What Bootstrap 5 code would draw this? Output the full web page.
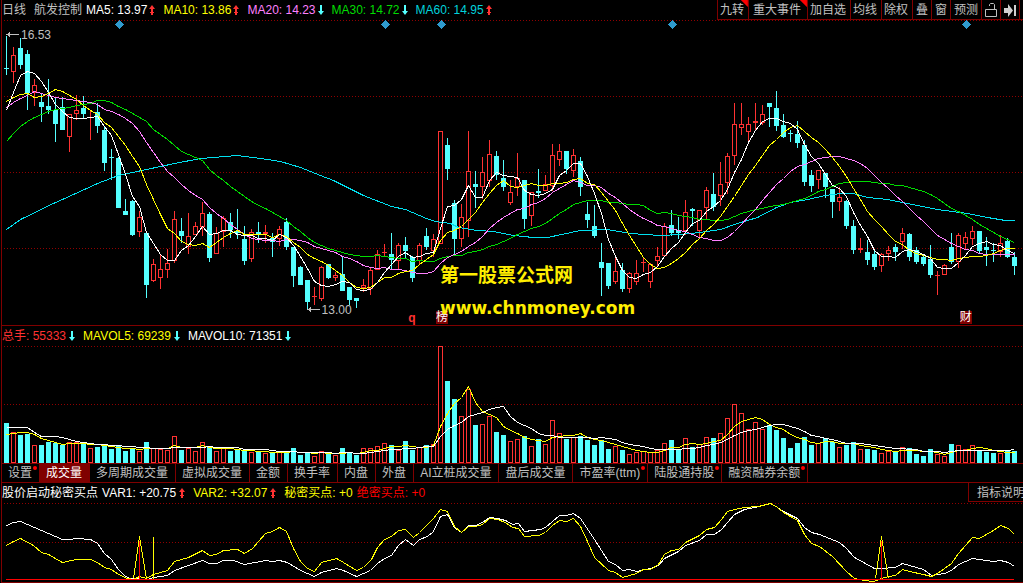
<!DOCTYPE html>
<html lang="zh-CN">
<head>
<meta charset="utf-8">
<meta name="viewport" content="width=device-width, initial-scale=1">
<title>航发控制 日线</title>
<link href="https://cdn.jsdelivr.net/npm/bootstrap@5.3.0/dist/css/bootstrap.min.css" rel="stylesheet">
<style>
:root{--frame:#800000;--up:#ff3232;--down:#54ffff;--ink:#c0c0c0}
body{background:#000;color:var(--ink);font:12px/20px "Liberation Sans","Noto Sans CJK SC",sans-serif}
button{background:none;border:0;color:inherit;font:inherit;line-height:inherit}
.frame-l{border-left:1px solid var(--frame);margin-left:1px}
.bar{height:20px;white-space:nowrap;flex:none}
.reading{margin-right:8px}
.trend{width:6px;height:10px;margin-left:2px;display:inline-block;vertical-align:-1px}
.roomy .trend{margin-left:3px}
.pane-price{flex:306 1 0;min-height:0}
.pane-volume{flex:117 1 0;min-height:0}
.pane-signal{flex:80 1 0;min-height:0}
.chart{position:absolute;inset:0 auto auto -2px;width:calc(100% + 2px);height:100%;display:block}
.chart *{shape-rendering:crispEdges;vector-effect:non-scaling-stroke}
.white{color:#fff}.yellow{color:#ff0}.pink{color:#ff80ff}.green{color:#00dc00}.aqua{color:#00d2dc}
.red{color:var(--up)}.pure{color:#f00}
.tools{border-bottom:1px solid var(--frame);padding-right:3px;background:#000}
.tools button{border-left:1px solid var(--frame);padding:0 3px;position:relative;height:19px}
.tools button:last-child{border-right:1px solid var(--frame)}
.tools .wide{padding:0 6px 0 4px}
.tools .flag::after{content:"";position:absolute;top:0;right:0;width:7px;height:7px;background:#f00;clip-path:polygon(0 0,100% 0,100% 100%)}
.tools .pad{padding:0 4px 0 2px}
.tools svg{width:12px;height:14px;display:block}
.tabs{border-top:1px solid var(--frame);border-bottom:1px solid var(--frame);line-height:18px}
.tabs button{padding:0 7px 0 6px;border-right:1px solid var(--frame);position:relative}
.tabs .active{background:var(--frame);color:#fff}
.tabs .hot::after{content:"";position:absolute;top:2px;right:2px;width:4px;height:4px;border-radius:50%;background:#f00}
.explain{width:55px;height:19px;padding:0 0 0 8px;border:solid var(--frame);border-width:0 0 1px 1px;overflow:hidden;text-align:left}
.over{position:absolute;white-space:nowrap;line-height:14px}
.hi{left:19px;top:8px}
.lo{left:31.3%;top:92.5%}
.mark-q{left:39.8%;top:95%;font-weight:700;line-height:14px}
.tag-box{background:var(--frame);color:#fff;height:13px;line-height:13px;top:95%}
.tag-a{left:42.5%}.tag-b{left:93.8%}
.site{left:42.9%;top:78%;color:#ffee00;font-weight:700}
.site-name{font-size:19px;line-height:30px;font-family:"Noto Sans CJK SC",sans-serif}
.site-url{font-size:17px;line-height:38px;font-family:"DejaVu Sans",sans-serif}
</style>
</head>
<body>
<svg class="d-none">
  <symbol id="up" viewBox="0 0 6 10"><path d="M3 0L6 4H4V7H5V8H4V10H2V8H1V7H2V4H0Z" fill="#ff3232"/></symbol>
  <symbol id="down" viewBox="0 0 6 10"><path d="M3 10L6 6H4V0H2V6H0Z" fill="#54ffff"/></symbol>
</svg>
<main class="d-flex flex-column vh-100 overflow-hidden">
  <header class="bar d-flex justify-content-between">
    <div class="d-flex align-items-center overflow-hidden ps-0 frame-l">
      <span class="me-2">日线</span><span class="me-1">航发控制</span>
      <span class="reading white">MA5: 13.97<svg class="trend"><use href="#up"/></svg></span>
      <span class="reading yellow">MA10: 13.86<svg class="trend"><use href="#up"/></svg></span>
      <span class="reading pink">MA20: 14.23<svg class="trend"><use href="#down"/></svg></span>
      <span class="reading green">MA30: 14.72<svg class="trend"><use href="#down"/></svg></span>
      <span class="reading aqua">MA60: 14.95<svg class="trend"><use href="#up"/></svg></span>
    </div>
    <div class="tools d-flex flex-shrink-0">
      <button class="flag pad">九转</button><button class="flag wide">重大事件</button><button class="pad">加自选</button><button class="pad">均线</button><button class="pad">除权</button><button>叠</button><button>窗</button><button>预测</button>
      <button aria-label="锁定"><svg viewBox="0 0 12 14"><path d="M.5 6.500H11.500V13.500H.5ZM4.500 3V1.500L5.500 .5H8.500L9.500 1.500V6" fill="none" stroke="#c0c0c0"/></svg></button>
      <button aria-label="最新"><svg viewBox="0 0 12 14"><path d="M0 5H4V1L9 7.500L4 14V10H0ZM10 2H12V13H10Z" fill="#d0d0d0"/></svg></button>
    </div>
  </header>

  <section class="pane-price frame-l position-relative">
    <svg class="chart" id="price" viewBox="0 20 1023 306" preserveAspectRatio="none"></svg>
    <span class="over hi">16.53</span>
    <span class="over lo">13.00</span>
    <span class="over mark-q red">q</span>
    <span class="over tag-box tag-a">榜</span>
    <span class="over tag-box tag-b">财</span>
    <div class="over site"><div class="site-name">第一股票公式网</div><div class="site-url">www.chnmoney.com</div></div>
  </section>

  <div class="bar frame-l roomy">
    <span class="reading red">总手: 55333<svg class="trend"><use href="#down"/></svg></span><span class="reading yellow">MAVOL5: 69239<svg class="trend"><use href="#down"/></svg></span><span class="reading white">MAVOL10: 71351<svg class="trend"><use href="#down"/></svg></span>
  </div>
  <section class="pane-volume frame-l position-relative">
    <svg class="chart" id="volume" viewBox="0 346 1023 117" preserveAspectRatio="none"></svg>
  </section>

  <nav class="bar tabs frame-l d-flex">
    <button class="hot">设置</button><button class="active">成交量</button><button>多周期成交量</button><button>虚拟成交量</button><button>金额</button><button>换手率</button><button>内盘</button><button>外盘</button><button>AI立桩成交量</button><button>盘后成交量</button><button class="hot">市盈率(ttm)</button><button class="hot">陆股通持股</button><button class="hot">融资融券余额</button>
  </nav>

  <div class="bar frame-l roomy d-flex justify-content-between">
    <div><span class="me-1 white">股价启动秘密买点</span><span class="reading white">VAR1: +20.75<svg class="trend"><use href="#up"/></svg></span><span class="reading yellow">VAR2: +32.07<svg class="trend"><use href="#up"/></svg></span><span class="me-1 yellow">秘密买点: +0</span><span class="pure">绝密买点: +0</span></div>
    <button class="explain">指标说明</button>
  </div>
  <section class="pane-signal frame-l position-relative">
    <svg class="chart" id="signal" viewBox="0 503 1023 80" preserveAspectRatio="none"></svg>
  </section>
</main>
<script src="https://cdn.jsdelivr.net/npm/bootstrap@5.3.0/dist/js/bootstrap.bundle.min.js"></script>
<script>
const UP='#ff3232',DOWN='#54ffff',FRAME='#800000',STEP=7,FIRST=6;
// one candle per entry: direction, high, body top, body bottom, low
const candles=`c36 68 68 75,r47 55 72 83,c38 48 65 69,c50 54 93 110,r79 85 93 106,c93 102 107 122,c79 106 110 114,c97 110 124 142,c97 107 130 130,r114 114 137 152,r95 110 114 120,c96 108 114 118,r110 117 117 140,c103 112 126 133,c126 130 163 171,c149 157 157 180,c157 158 208 208,c199 211 215 215,c200 201 235 236,r211 217 232 237,c233 233 285 298,r259 264 281 282,r255 269 278 289,r249 263 270 278,r211 219 261 263,c218 231 236 243,r213 236 247 254,r222 226 235 235,r202 213 227 236,c212 214 258 262,r227 233 254 254,r216 218 232 247,c213 222 230 238,c209 231 233 239,c226 239 261 265,r229 232 259 262,c222 232 234 243,r225 232 234 243,c233 238 242 257,r226 229 239 246,c218 222 247 250,c247 247 276 287,c266 267 285 285,c280 280 302 310,r287 296 296 305,r266 267 299 301,c264 264 278 279,r272 275 278 281,c256 274 291 291,c287 287 300 305,c298 298 301 308,r279 285 288 292,r267 270 289 295,r250 254 270 270,r244 252 253 257,c233 254 260 270,r243 245 261 269,c237 245 251 258,c256 257 278 282,r243 245 261 265,c228 236 247 250,r234 239 251 257,r131 131 244 244,c138 145 169 180,c200 203 239 254,r204 217 239 247,r131 171 221 237,c171 184 187 208,r157 172 187 199,r140 154 181 187,c151 156 175 180,c160 178 187 191,r180 192 203 205,r153 178 187 196,c180 180 219 229,r192 192 216 226,c169 191 193 198,r175 184 191 191,r144 155 186 191,r144 151 160 166,c151 151 169 174,r149 155 171 177,c157 161 187 196,c202 214 220 228,c205 226 236 238,c243 262 268 296,c263 263 286 289,r257 271 282 284,c263 270 289 292,r272 273 289 293,r260 273 282 285,r258 262 262 272,r263 264 282 288,r247 256 261 266,r223 226 256 256,c210 225 233 236,c217 230 233 239,r200 212 231 235,c208 209 211 226,r210 210 231 238,r187 190 208 219,c173 194 207 211,r162 184 196 206,r153 156 183 194,r103 124 156 165,r103 124 128 135,r117 124 132 142,r103 121 123 131,r105 114 123 125,c103 103 107 127,c91 108 126 131,c114 125 137 138,c130 133 133 142,c121 134 143 148,c140 145 182 186,c170 175 186 192,r170 170 180 189,c173 173 187 198,c189 189 202 218,r187 197 202 211,c200 201 226 229,c220 226 250 254,r238 248 250 253,c240 252 260 265,c250 254 267 270,r253 254 266 272,r246 250 254 261,c244 247 252 261,r228 233 242 249,c233 234 257 261,c247 250 262 264,c255 257 264 266,c245 259 275 278,r271 275 275 295,r264 265 275 275,c233 247 262 264,r233 235 262 268,r232 237 244 250,r226 231 239 245,c231 231 251 254,c237 247 250 266,c243 250 251 262,r235 243 252 257,c238 241 257 258,c252 257 266 275`
 .split(',').map(s=>({dir:s[0],v:s.slice(1).split(' ').map(Number)}));
const volumes=[423,432,435,434,445,445,442,443,445,442,442,442,448,447,445,449,446,451,449,451,442,448,449,450,436,450,448,451,442,446,451,448,451,449,450,452,452,453,452,452,452,448,455,452,456,451,453,455,448,453,455,448,448,446,443,445,450,441,450,447,445,444,346,381,399,416,389,425,424,416,432,435,441,439,436,446,439,444,420,433,439,437,436,440,445,440,449,446,450,454,452,451,452,450,443,440,449,438,447,444,437,438,433,418,404,413,429,422,429,425,430,438,448,443,437,445,443,438,442,447,445,442,449,449,450,453,451,451,447,448,454,456,449,454,456,444,445,449,445,450,452,453,453,450,451];
const ma60='6,229 20,219 55,202 62,199 97,183 118,175 146,169 174,163 200,158 237,155 260,158 280,161 300,167 320,175 333,180 363,195 391,206 405,209 426,218 435,221 450,223 458,227 477,230 493,231 513,235 533,237 547,237 580,230 607,229 630,233 660,235 680,234 699,232 720,229 737,223 757,217 776,207 790,202 807,199 825,195 840,193 853,193 867,197 887,199 907,203 937,209 967,213 987,217 1005,220 1014,220';
const var1='6,525 13,522 20,521 27,524 34,527 62,539 69,539 76,538 90,539 97,543 104,553 111,559 118,569 125,576 130,578 147,579 153,577 167,575 174,570 202,560 209,563 216,563 223,560 233,560 244,564 265,560 272,561 279,560 287,562 300,570 314,576 321,572 336,568 343,570 356,576 370,570 377,563 384,558 391,555 398,545 405,539 413,545 419,539 427,536 433,531 440,516 447,514 454,527 461,532 468,525 475,525 482,522 489,517 497,518 505,520 512,524 518,523 524,531 540,529 545,527 552,521 559,515 566,515 573,513 580,518 594,539 608,561 615,564 622,570 629,569 636,571 650,568 658,565 664,558 678,551 685,545 699,540 706,534 714,534 721,529 734,514 744,509 754,507 770,503 777,507 783,511 797,518 804,527 811,532 819,534 839,542 846,548 854,557 874,568 881,568 895,567 902,563 923,569 931,575 944,573 951,570 958,564 972,558 979,559 993,561 1000,560 1008,562 1014,566';
const var2='6,545 13,541 20,538 33,545 41,552 48,554 62,562 76,559 90,559 97,562 104,567 111,569 118,574 127,578 133,579 139,576 146,578 153,574 167,570 174,561 181,559 188,557 202,550 209,555 216,554 223,550 237,549 244,553 252,548 265,533 272,531 279,527 286,531 293,548 300,561 307,568 314,571 321,562 336,558 343,562 356,570 363,567 371,559 377,547 384,539 391,536 398,530 405,529 413,537 419,532 433,518 440,509 447,511 454,526 461,532 468,526 475,526 482,524 489,518 497,519 505,522 512,527 518,528 524,536 538,535 545,532 552,525 559,520 566,521 573,518 580,526 587,541 594,557 608,570 615,572 622,577 636,573 643,569 650,569 658,564 664,554 671,550 678,549 685,542 699,535 706,529 714,527 721,519 727,511 734,509 744,507 758,506 770,503 777,507 783,512 797,520 804,534 811,543 819,546 832,556 846,571 854,578 864,580 873,581 881,578 888,576 895,575 902,569 909,571 923,574 931,576 937,573 951,563 958,553 972,537 979,538 986,534 993,530 1000,525 1008,528 1014,534';

const seg=(x1,y1,x2,y2,c,dash)=>`<line x1="${x1}" y1="${y1}" x2="${x2}" y2="${y2}" stroke="${c}"${dash?` stroke-dasharray="${dash}"`:''}/>`;
const box=(x,y,w,h,c)=>`<rect x="${x}" y="${y}" width="${w}" height="${h}" fill="${c}"/>`;
const hollow=(x,y,w,h,c)=>`<rect x="${x+.5}" y="${y+.5}" width="${w-1}" height="${Math.max(h-1,.1)}" fill="#000" stroke="${c}"/>`;
const grid=y=>seg(4,y+.5,1023,y+.5,'#900000','1 2');
const curve=(pts,c)=>`<polyline points="${pts.split(' ').map(p=>p.split(',').map(n=>+n+.5).join()).join(' ')}" fill="none" stroke="${c}"/>`;
// moving average over n values; the lead-in covers the days before the window is full
function average(values,n,lead){
  return values.map((_,i)=>{
    const y=i<n-1?lead[i]:values.slice(i-n+1,i+1).reduce((a,b)=>a+b)/n;
    return `${FIRST+STEP*i},${Math.round(y)}`;
  }).join(' ');
}

let p=[20,96,172,248].map(grid).join('');
candles.forEach(({dir,v:[hi,top,bot,lo]},i)=>{
  const x=FIRST+STEP*i,c=dir==='r'?UP:DOWN,h=Math.max(bot-top,1);
  if(hi<top)p+=box(x,hi,1,top-hi,c);
  if(lo>bot)p+=box(x,bot,1,lo-bot,c);
  p+=dir==='r'&&h>2?hollow(x-2,top,5,h,c):box(x-2,top,5,h,c);
});
const close=candles.map(({dir,v})=>dir==='r'?v[1]:v[2]);
p+=curve(ma60,'#00e0f0');
p+=curve(average(close,30,[141,133,126,121,117,114,111,109,108,107,105,104,103,100,100,102,106,109,113,117,121,129,134,139,145,151,154,157,160]),'#00dc00');
p+=curve(average(close,20,[107,102,98,95,91,93,95,97,98,99,100,101,102,104,109,111,114,118,123]),'#ff80ff');
p+=curve(average(close,10,[101,97,94,93,97,96,93,89,91]),'#ffff00');
p+=curve(average(close,5,[110,92,75,71]),'#ffffff');
p+=[119,385,441,672,966].map(x=>`<path d="M${x+.5} 20L${x+5} 24.500L${x+.5} 29L${x-4} 24.500Z" fill="#2f9acd"/>`).join('');
p+=seg(7,34.5,19,34.5,'#c0c0c0')+`<path d="M6 34.500L10 32V37Z" fill="#c0c0c0"/>`;
p+=seg(308,309.5,320,309.5,'#c0c0c0')+`<path d="M307 309.500L311 307V312Z" fill="#c0c0c0"/>`;
p+=seg(2,325.5,1023,325.5,FRAME);
price.innerHTML=p;

let q=[346,404].map(grid).join('');
volumes.forEach((y,i)=>{
  const x=FIRST+STEP*i-2;
  q+=candles[i].dir==='r'?hollow(x,y,5,463-y,UP):box(x,y,5,463-y,DOWN);
});
q+=curve(average(volumes,5,[434,433,432,432]),'#ffff00');
q+=curve(average(volumes,10,[427,427,427,427,432,436,436,436,437]),'#ffffff');
volume.innerHTML=q;

let s=[503,542].map(grid).join('');
s+=curve(var1,'#ffffff')+curve(var2,'#ffff00');
s+=seg(139.5,541,139.5,579,'#f00')+seg(881.5,541,881.5,579,'#f00')+seg(153.5,537,153.5,579,'#ff0');
s+=curve('133,578 139,536 146,578','#ffff00')+curve('875,578 881,536 888,578','#ffff00');
s+=seg(6,579.5,1014,579.5,'#f00')+seg(2,582.5,1023,582.5,FRAME);
signal.innerHTML=s;
</script>
</body>
</html>
